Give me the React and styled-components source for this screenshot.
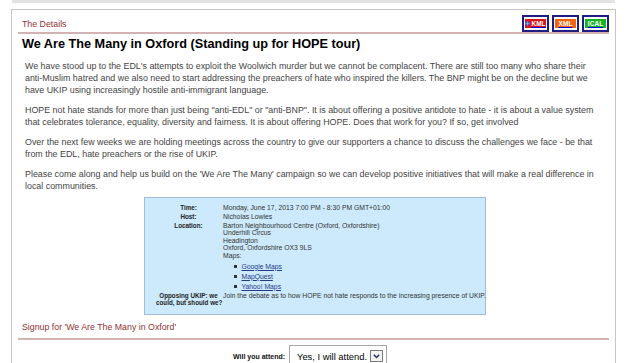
import React from "react";
import styled, { createGlobalStyle } from "styled-components";

const Global = createGlobalStyle`
  html, body { margin: 0; padding: 0; background: #fff; }
  body { font-family: "Liberation Sans", Arial, sans-serif; overflow: hidden; }
`;

const Page = styled.div`
  width: 640px;
  height: 363px;
  overflow: hidden;
`;

const TopStrip = styled.div`
  height: 3px;
  margin: 0 25px 0 12px;
  background: #e3e3e3;
`;

const Panel = styled.div`
  box-sizing: border-box;
  margin: 6px 0 0 11px;
  width: 605px;
  min-height: 360px;
  border: 1px solid #c6c6c6;
  border-bottom: none;
  padding: 0 6px;
`;

const SectionHead = styled.div`
  display: flex;
  justify-content: space-between;
  align-items: flex-end;
  margin-top: ${(p) => p.$top || 0}px;
  height: ${(p) => p.$h || 17}px;
  border-bottom: 2px solid #d2b3b3;
`;

const HeadText = styled.span`
  font-size: 8.8px;
  line-height: 12px;
  color: #8e3434;
  padding: 0 0 ${(p) => p.$pb || 3}px 4px;
`;

const Feeds = styled.div`
  display: flex;
  gap: 3px;
`;

const FeedLink = styled.a`
  box-sizing: border-box;
  width: 27px;
  height: 17px;
  border: 2px solid #1d1d84;
  display: flex;
  align-items: center;
  justify-content: center;
  background: #fff;
  padding-bottom: 1px;
`;

const Badge = styled.span`
  width: 21px;
  height: 9px;
  background: ${(p) => p.$bg};
  color: #fff;
  font-weight: bold;
  font-size: 6.4px;
  line-height: 9px;
  display: flex;
  align-items: center;
  justify-content: center;
  gap: 1px;
  letter-spacing: 0.1px;
`;

const Title = styled.h1`
  margin: 2px 0 0 4px;
  font-size: 12.7px;
  line-height: 16px;
  font-weight: bold;
  color: #000;
`;

const Para = styled.p`
  margin: 8px 0 0 7px;
  font-size: 8.9px;
  line-height: 12px;
  color: #444;
  white-space: nowrap;
`;

const InfoBox = styled.div`
  box-sizing: border-box;
  width: 342px;
  margin: 5px 0 0 126px;
  background: #cdeafc;
  border: 1px solid #9fbdd6;
  padding: 5px 4px 7px 11px;
  display: grid;
  grid-template-columns: 65px 1fr;
  column-gap: 2px;
  font-size: 6.8px;
  line-height: 7.6px;
  color: #333;
`;

const Label = styled.div`
  font-weight: bold;
  font-size: 6.3px;
  text-align: center;
  white-space: nowrap;
  color: #222;
  padding: 0.7px 0;
`;

const Value = styled.div`
  padding: 0.7px 0;
  white-space: nowrap;
`;

const MapList = styled.ul`
  list-style: none;
  margin: 3px 0 0;
  padding: 0;
`;

const MapItem = styled.li`
  display: flex;
  align-items: center;
  gap: 5px;
  margin-left: 11px;
  margin-top: ${(p) => (p.$first ? 0 : 2.4)}px;
  &::before {
    content: "";
    width: 2.5px;
    height: 2.5px;
    background: #333;
  }
`;

const MapLink = styled.a`
  color: #27378a;
  text-decoration: underline;
`;

const AttendRow = styled.div`
  display: flex;
  justify-content: center;
  align-items: center;
  gap: 4px;
  margin-top: 5px;
  padding-right: 7px;
`;

const AttendLabel = styled.span`
  font-size: 7px;
  font-weight: bold;
  color: #111;
`;

const FakeSelect = styled.div`
  box-sizing: border-box;
  width: 98px;
  height: 22px;
  border: 1px solid #a8a8a8;
  background: #fff;
  display: flex;
  align-items: center;
  justify-content: space-between;
  padding: 0 3px 0 7px;
  font-size: 9.4px;
  color: #000;
`;

const ArrowBox = styled.span`
  box-sizing: border-box;
  width: 13px;
  height: 12px;
  border: 1px solid #7a7a7a;
  background: #f3f3f3;
  display: flex;
  align-items: center;
  justify-content: center;
`;

function Globe() {
  return (
    <svg width="5" height="5" viewBox="0 0 10 10">
      <circle cx="5" cy="5" r="4.5" fill="#3b5fd0" />
      <path d="M1 5h8M5 1v8" stroke="#9fd0ff" strokeWidth="1" />
    </svg>
  );
}

export default function App() {
  return (
    <Page>
      <Global />
      <TopStrip />
      <Panel>
        <SectionHead $top={5} $h={17}>
          <HeadText $pb={2}>The Details</HeadText>
          <Feeds>
            <FeedLink href="#">
              <Badge $bg="#d8141c">
                <Globe />
                KML
              </Badge>
            </FeedLink>
            <FeedLink href="#">
              <Badge $bg="#f4620c">XML</Badge>
            </FeedLink>
            <FeedLink href="#">
              <Badge $bg="#16b324">ICAL</Badge>
            </FeedLink>
          </Feeds>
        </SectionHead>
        <Title>We Are The Many in Oxford (Standing up for HOPE tour)</Title>
        <Para>
          We have stood up to the EDL's attempts to exploit the Woolwich murder but we cannot be complacent. There are still too many who share their
          <br />
          anti-Muslim hatred and we also need to start addressing the preachers of hate who inspired the killers. The BNP might be on the decline but we
          <br />
          have UKIP using increasingly hostile anti-immigrant language.
        </Para>
        <Para>
          HOPE not hate stands for more than just being "anti-EDL" or "anti-BNP". It is about offering a positive antidote to hate - it is about a value system
          <br />
          that celebrates tolerance, equality, diversity and fairness. It is about offering HOPE. Does that work for you? If so, get involved
        </Para>
        <Para>
          Over the next few weeks we are holding meetings across the country to give our supporters a chance to discuss the challenges we face - be that
          <br />
          from the EDL, hate preachers or the rise of UKIP.
        </Para>
        <Para>
          Please come along and help us build on the 'We Are The Many' campaign so we can develop positive initiatives that will make a real difference in
          <br />
          local communities.
        </Para>
        <InfoBox>
          <Label>Time:</Label>
          <Value>Monday, June 17, 2013 7:00 PM - 8:30 PM GMT+01:00</Value>
          <Label>Host:</Label>
          <Value>Nicholas Lowles</Value>
          <Label>Location:</Label>
          <Value>
            Barton Neighbourhood Centre (Oxford, Oxfordshire)
            <br />
            Underhill Circus
            <br />
            Headington
            <br />
            Oxford, Oxfordshire OX3 9LS
            <br />
            Maps:
            <MapList>
              <MapItem $first>
                <MapLink href="#">Google Maps</MapLink>
              </MapItem>
              <MapItem>
                <MapLink href="#">MapQuest</MapLink>
              </MapItem>
              <MapItem>
                <MapLink href="#">Yahoo! Maps</MapLink>
              </MapItem>
            </MapList>
          </Value>
          <Label>
            Opposing UKIP: we
            <br />
            could, but should we?
          </Label>
          <Value>Join the debate as to how HOPE not hate responds to the increasing presence of UKIP.</Value>
        </InfoBox>
        <SectionHead $top={6} $h={17}>
          <HeadText $pb={5}>Signup for 'We Are The Many in Oxford'</HeadText>
        </SectionHead>
        <AttendRow>
          <AttendLabel>Will you attend:</AttendLabel>
          <FakeSelect>
            Yes, I will attend.
            <ArrowBox>
              <svg width="7" height="5" viewBox="0 0 7 5">
                <path d="M0.8 0.8L3.5 3.6L6.2 0.8" fill="none" stroke="#1c2c5c" strokeWidth="1.4" />
              </svg>
            </ArrowBox>
          </FakeSelect>
        </AttendRow>
      </Panel>
    </Page>
  );
}
